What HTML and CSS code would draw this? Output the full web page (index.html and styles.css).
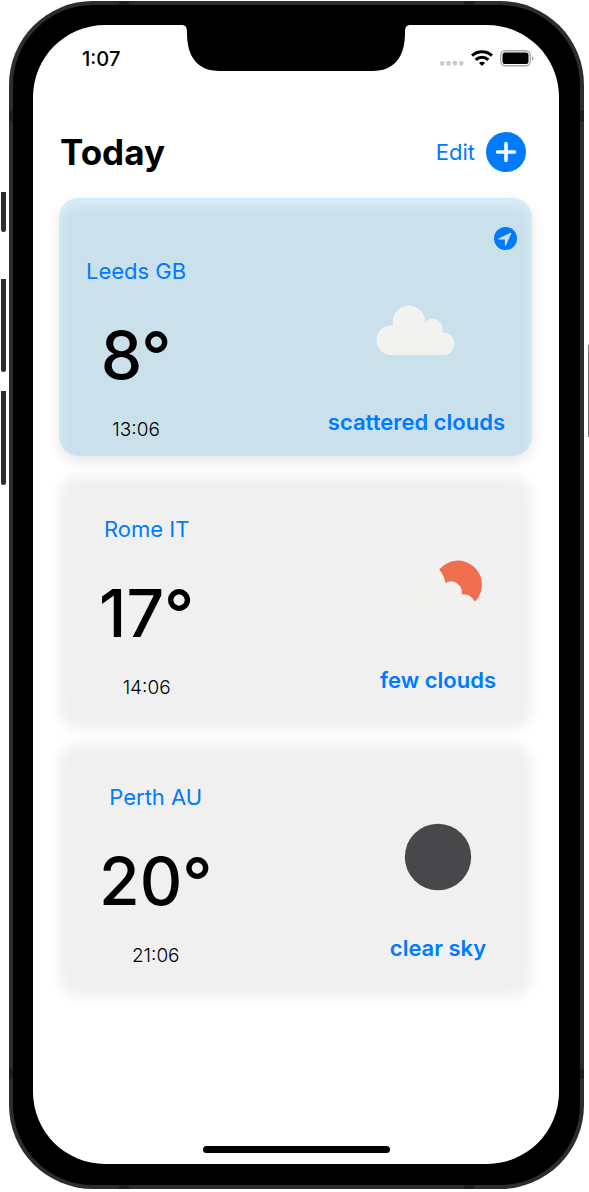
FILE: index.html
```html
<!DOCTYPE html>
<html lang="en">
<head>
<meta charset="utf-8">
<meta name="viewport" content="width=device-width, initial-scale=1">
<title>Today</title>
<link rel="stylesheet" href="styles.css">
</head>
<body>
<div class="phone">
  <span class="side-key key-mute"></span>
  <span class="side-key key-up"></span>
  <span class="side-key key-down"></span>
  <span class="side-key key-power"></span>
  <div class="bezel">
    <div class="screen">
      <div class="status-bar">
        <span class="clock">1:07</span>
        <svg class="notch" viewBox="0 0 230 46" aria-hidden="true"><path d="M0 0C5 0 6 2 6 8C6 30 15 46 39 46H191C215 46 224 30 224 8C224 2 225 0 230 0Z"/></svg>
        <div class="status-icons">
          <svg width="24" height="16" viewBox="0 0 24 16" aria-hidden="true"><g fill="#ccc"><rect x="0" y="11" width="4.500" height="4.500" rx="1.500"/><rect x="6.300" y="11" width="4.500" height="4.500" rx="1.500"/><rect x="12.600" y="11" width="4.500" height="4.500" rx="1.500"/><rect x="19" y="11" width="4.500" height="4.500" rx="1.500"/></g></svg>
          <svg width="22" height="16" viewBox="0 0 22 16" aria-hidden="true"><g fill="none" stroke="#000" stroke-width="3"><path d="M1 5.600C6.500.3 15.500.3 21 5.600"/><path d="M4.700 9.800C8.200 6.400 13.800 6.400 17.300 9.800"/></g><path d="M11 15.900L8 12.900C9.700 11.300 12.300 11.300 14 12.900Z"/></svg>
          <svg width="34" height="17" viewBox="0 0 34 17" aria-hidden="true"><rect x=".75" y=".75" width="29.500" height="15" rx="4.500" fill="none" stroke="#a5a5a5" stroke-width="1.300"/><rect x="2.500" y="2.500" width="26" height="11.500" rx="2.500"/><path d="M32 6C34 7 34 10 32 11Z" fill="#a5a5a5"/></svg>
        </div>
      </div>

      <header class="header">
        <h1 class="title">Today</h1>
        <button class="edit" type="button">Edit</button>
        <button class="add" type="button" aria-label="Add city">
          <svg width="40" height="40" viewBox="0 0 40 40" aria-hidden="true"><circle cx="20" cy="20" r="20" fill="#007aff"/><path d="M20 11.500V28.500M11.500 20H28.500" stroke="#fff" stroke-width="3.600" stroke-linecap="round"/></svg>
        </button>
      </header>

      <main class="cards">
        <article class="card current">
          <svg class="pin" viewBox="0 0 23 23" aria-label="Current location"><circle cx="11.500" cy="11.500" r="11.500" fill="#007aff"/><path d="M4.200 11.700L16.600 5.700Q17.600 5.400 17.300 6.400L11.900 18.500Q11.200 19.200 10.900 18.200V12.900Q10.900 12.600 10.600 12.600L4.800 12.600Q3.700 12.300 4.200 11.700Z" fill="#cae0eb"/></svg>
          <div class="reading">
            <a class="city" href="#">Leeds GB</a>
            <span class="degrees">8°</span>
            <time class="time">13:06</time>
          </div>
          <div class="weather">
            <svg class="sky" viewBox="0 0 134 134" aria-hidden="true"><path fill="#f2f2f0" d="M42 91A14.800 14.800 0 1 1 44 61.500A16.300 16.300 0 1 1 76.200 58A10 10 0 0 1 93 68.200A11.400 11.400 0 1 1 95 91Z"/></svg>
            <a class="condition" href="#">scattered clouds</a>
          </div>
        </article>

        <article class="card">
          <div class="reading">
            <a class="city" href="#">Rome IT</a>
            <span class="degrees">17°</span>
            <time class="time">14:06</time>
          </div>
          <div class="weather">
            <svg class="sky" viewBox="0 0 134 134" aria-hidden="true"><path fill="#f1f1ef" d="M40 96A14.800 14.800 0 1 1 42 66.500A16.300 16.300 0 1 1 74 61A11 11 0 0 1 90.700 72.500A12 12 0 1 1 92 96Z"/><path fill="#ef6e4e" d="M68.300 47.500A24 24 0 1 1 104 79.500Q98.500 71 90.700 72.500A11 11 0 0 0 74.300 61Q73.500 54 68.300 47.500Z"/></svg>
            <a class="condition" href="#">few clouds</a>
          </div>
        </article>

        <article class="card">
          <div class="reading">
            <a class="city" href="#">Perth AU</a>
            <span class="degrees">20°</span>
            <time class="time">21:06</time>
          </div>
          <div class="weather">
            <svg class="sky" viewBox="0 0 134 134" aria-hidden="true"><circle cx="67" cy="67" r="33.200" fill="#48484a"/></svg>
            <a class="condition" href="#">clear sky</a>
          </div>
        </article>
      </main>
      <div class="home-bar"></div>
    </div>
  </div>
</div>
</body>
</html>
```

FILE: styles.css
```css
* {
  box-sizing: border-box;
}

body {
  margin: 0;
  min-height: 100vh;
  display: flex;
  padding: 1px 5px 3px 9px;
  background: #fff;
  color: #000;
  font-family: Inter, "Liberation Sans", sans-serif;
  overflow-x: hidden;
}

a {
  color: #007aff;
  text-decoration: none;
}

button {
  padding: 0;
  border: 0;
  background: none;
  color: #007aff;
  font: inherit;
  cursor: pointer;
}

.phone {
  position: relative;
  flex: 1;
  display: flex;
  padding: 4px;
  border-radius: 84px;
  background:
    linear-gradient(#1e1e1e, #1e1e1e) 0 110px / 100% 10px no-repeat,
    linear-gradient(#1e1e1e, #1e1e1e) 0 calc(100% - 110px) / 100% 10px no-repeat,
    linear-gradient(#1e1e1e, #1e1e1e) 110px 0 / 10px 100% no-repeat,
    linear-gradient(#1e1e1e, #1e1e1e) calc(100% - 110px) 0 / 10px 100% no-repeat,
    #2d2d2d;
}

/* Hardware keys on the sides of the case */
.side-key {
  position: absolute;
  left: -8px;
  width: 5px;
  background: #2b2f2e;
  border-radius: 0 0 3px 3px;
}

.key-mute {
  top: 191px;
  height: 40px;
}

.key-up {
  top: 278px;
  height: 93px;
}

.key-down {
  top: 390px;
  height: 94px;
}

.key-power {
  top: 344px;
  left: auto;
  right: -5px;
  width: 1px;
  height: 92px;
  background: #777;
}

.bezel {
  flex: 1;
  display: flex;
  padding: 20px 21px 21px 20px;
  border-radius: 80px;
  background: #000;
}

.screen {
  flex: 1;
  min-width: 0;
  display: flex;
  flex-direction: column;
  border-radius: 72px;
  background: #fff;
}

.status-bar {
  display: grid;
  grid-template-columns: 1fr 230px 1fr;
  align-items: center;
}

.clock {
  padding: 22px 0 0 49px;
  font-size: 20px;
  line-height: 24px;
  font-weight: 500;
}

.notch {
  display: block;
  width: 230px;
  height: 46px;
}

.status-icons {
  display: flex;
  justify-content: flex-end;
  gap: 7px;
  padding: 20px 25px 0 0;
}

.status-icons svg {
  flex: none;
}

.header {
  display: flex;
  align-items: center;
  gap: 11px;
  padding: 61px 33px 26px 27px;
}

.title {
  flex: 1;
  margin: 0;
  font-size: 35px;
  line-height: 40px;
  font-weight: 700;
}

.edit {
  font-size: 22px;
  line-height: 28px;
}

.add svg {
  display: block;
}

.cards {
  flex: 1;
  display: flex;
  flex-direction: column;
  gap: 15px;
  padding: 0 27px 0 26px;
}

.card {
  position: relative;
  isolation: isolate;
  display: flex;
  justify-content: space-between;
  align-items: flex-end;
  padding: 39px 27px 29px;
}

/* Soft-edged card surface */
.card::before {
  content: "";
  position: absolute;
  inset: 0;
  z-index: -1;
  border-radius: 20px;
  background: #f0f0f0;
  filter: blur(6px);
}

.card.current {
  margin-bottom: 5px;
  padding: 59px 27px 14px;
}

.card.current::before {
  background: #cae0eb;
  filter: none;
  box-shadow:
    inset 0 6px 12px #daeff9,
    0 5px 14px rgba(0, 0, 0, 0.1);
}

.pin {
  position: absolute;
  top: 29px;
  right: 15px;
  width: 23px;
  height: 23px;
}

.reading,
.weather {
  display: flex;
  flex-direction: column;
  align-items: center;
}

.city {
  font-size: 22px;
  line-height: 28px;
}

.degrees {
  padding: 28px 13px 21px;
  font-size: 66px;
  line-height: 84px;
  font-weight: 500;
}

.time {
  font-size: 19px;
  line-height: 24px;
  font-weight: 300;
}

.weather {
  gap: 10px;
  padding-bottom: 6px;
}

.sky {
  width: 134px;
  height: 134px;
}

.condition {
  font-size: 22px;
  line-height: 28px;
  font-weight: 600;
}

.home-bar {
  align-self: center;
  width: 187px;
  height: 7px;
  margin-bottom: 11px;
  border-radius: 4px;
  background: #000;
}
```
